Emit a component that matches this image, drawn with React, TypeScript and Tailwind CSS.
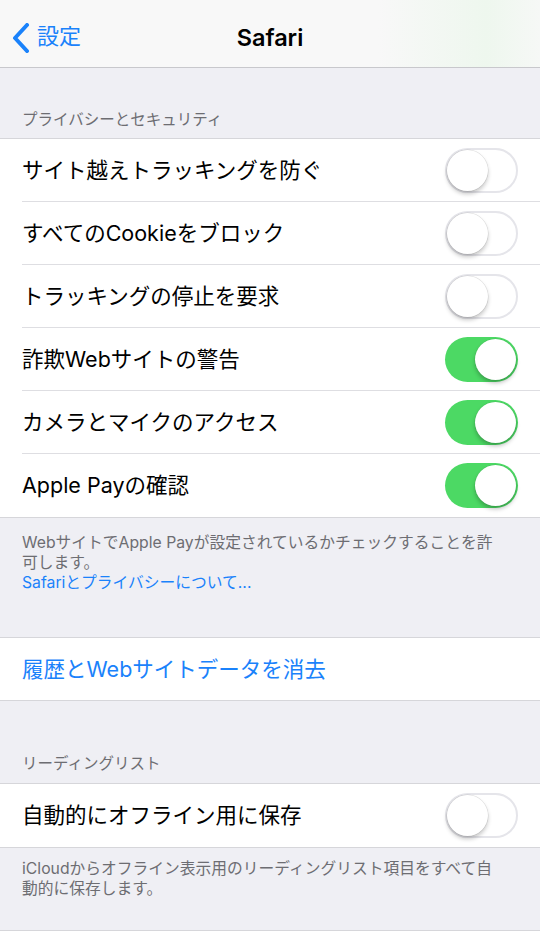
import React from "react";

const FONT = { fontFamily: '"Inter", "Noto Sans CJK JP", sans-serif' };

function Toggle({ on }: { on: boolean }) {
  if (on) {
    return (
      <div className="relative h-[45px] w-[73px] shrink-0 rounded-full bg-[#4cd964]">
        <div className="absolute right-[2px] top-[2px] h-[41px] w-[41px] rounded-full bg-white shadow-[0_3px_4px_rgba(0,0,0,0.25),0_0_0_0.5px_rgba(0,0,0,0.08)]" />
      </div>
    );
  }
  return (
    <div className="relative h-[45px] w-[73px] shrink-0 rounded-full border-[2px] border-[#e5e5ea] bg-white">
      <div className="absolute left-[0px] top-[0px] h-[41px] w-[41px] rounded-full bg-white shadow-[0_3px_4px_rgba(0,0,0,0.22),0_0_0_0.5px_rgba(0,0,0,0.12)]" />
    </div>
  );
}

function Row({ label, on, last }: { label: string; on: boolean; last?: boolean }) {
  return (
    <div className="pl-[22px]">
      <div
        className={
          "flex h-[63px] items-center justify-between pr-[22px] " +
          (last ? "" : "border-b border-[#dedee2]")
        }
      >
        <span className="text-[21.5px] text-black">{label}</span>
        <Toggle on={on} />
      </div>
    </div>
  );
}

export default function App() {
  const rows1: [string, boolean][] = [
    ["サイト越えトラッキングを防ぐ", false],
    ["すべてのCookieをブロック", false],
    ["トラッキングの停止を要求", false],
    ["詐欺Webサイトの警告", true],
    ["カメラとマイクのアクセス", true],
    ["Apple Payの確認", true],
  ];
  return (
    <div style={FONT} className="h-[936px] w-[540px] overflow-hidden bg-[#efeff4]">
      {/* nav */}
      <div className="relative flex h-[68px] items-center border-b border-[#c8c8cc] bg-[linear-gradient(90deg,#f8f8f8_0%,#f8f8f8_70%,#eef7ee_90%,#f6f8f6_100%)]">
        <div className="flex items-center pl-[12px] text-[#1a82fb]">
          <svg width="20" height="30" viewBox="0 0 20 30" className="mt-[8px]">
            <path d="M15 2 L3 15 L15 28" fill="none" stroke="#1a82fb" strokeWidth="4" strokeLinecap="round" strokeLinejoin="round" />
          </svg>
          <span className="ml-[5px] mt-[6px] text-[22px]">設定</span>
        </div>
        <div className="absolute left-0 right-0 top-[20px] text-center text-[23.5px] font-semibold text-black">
          Safari
        </div>
      </div>

      {/* header 1 */}
      <div className="flex h-[70px] items-end px-[22px] pb-[7px] text-[15.5px] text-[#6d6d72]">
        プライバシーとセキュリティ
      </div>

      {/* group 1 */}
      <div className="border-y border-[#d6d6da] bg-white">
        {rows1.map(([l, on], i) => (
          <Row key={l} label={l} on={on} last={i === rows1.length - 1} />
        ))}
      </div>

      {/* footer 1 */}
      <div className="h-[119px] px-[22px] pt-[15px] text-[15.75px] leading-[20px] text-[#6d6d72]">
        <div>
          WebサイトでApple Payが設定されているかチェックすることを許
          <br />
          可します。
        </div>
        <div className="text-[#1a82fb]">Safariとプライバシーについて...</div>
      </div>

      {/* group 2 */}
      <div className="border-y border-[#d6d6da] bg-white">
        <div className="flex h-[62px] items-center px-[22px] text-[21.5px] text-[#1a82fb]">
          履歴とWebサイトデータを消去
        </div>
      </div>

      {/* header 2 */}
      <div className="flex h-[82px] items-end px-[22px] pb-[8px] text-[15.5px] text-[#6d6d72]">
        リーディングリスト
      </div>

      {/* group 3 */}
      <div className="border-y border-[#d6d6da] bg-white">
        <Row label="自動的にオフライン用に保存" on={false} last />
      </div>

      {/* footer 3 */}
      <div className="h-[82px] px-[22px] pt-[11px] text-[15.75px] leading-[19.5px] text-[#6d6d72]">
        iCloudからオフライン表示用のリーディングリスト項目をすべて自
        <br />
        動的に保存します。
      </div>
      <div className="h-[20px] border-t border-[#d6d6da] bg-white" />
    </div>
  );
}
